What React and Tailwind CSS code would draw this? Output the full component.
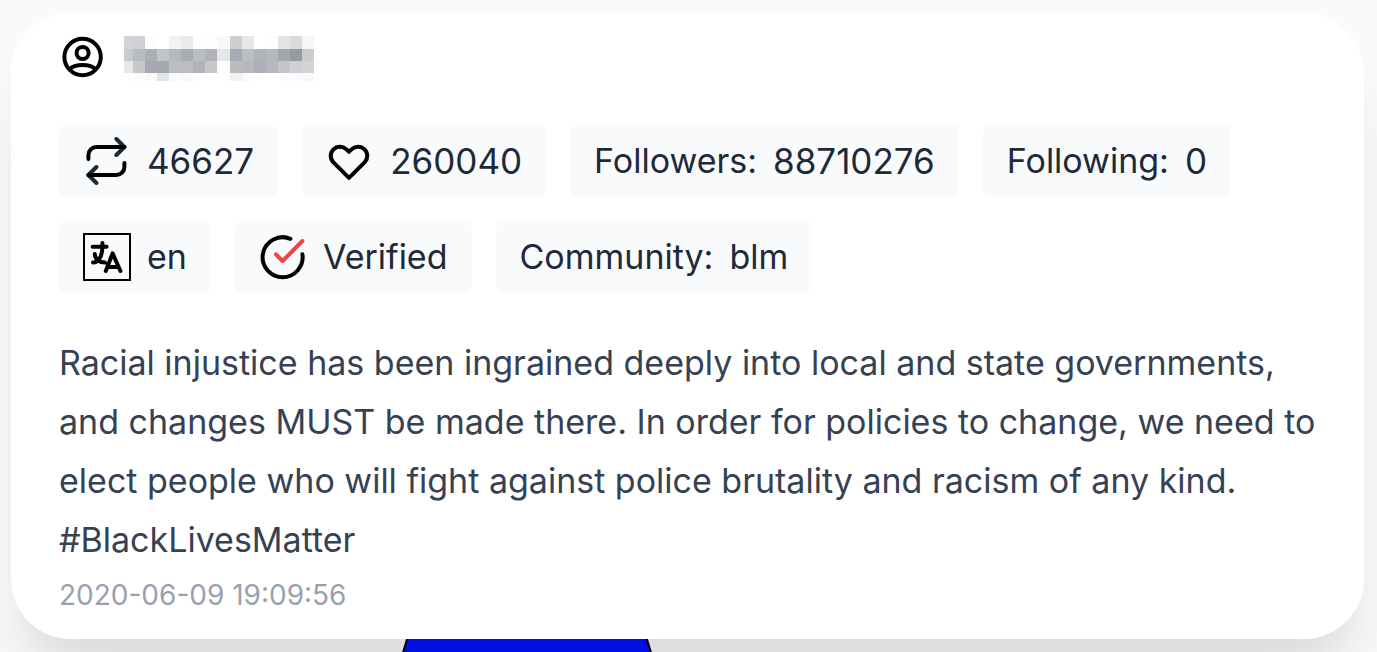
const COLS = [
  [0, 9], [9, 12], [21, 12], [33, 12], [45, 12], [57, 12], [69, 12], [81, 12],
  [93, 13], [106, 12], [118, 12], [130, 12], [142, 12], [154, 12], [166, 12], [178, 12],
];
const ROWS = [[0, 13], [13, 12], [25, 12], [37, 8]];
const TONES = [
  ['#d1d3d7', '#cdd1d5', '#fcfcfd', '#ffffff', '#f1f2f4', '#e8eaec', '#fdfdfd', '#fdfdfd', '#f8f8f9', '#cecfd3', '#e7e8ea', '#ffffff', '#fdfdfd', '#e3e4e6', '#d9dbdd', '#f5f6f6'],
  ['#c9cacd', '#b8bcc1', '#abafb4', '#c1c5ca', '#b5b8be', '#a9acb1', '#babdc1', '#b0b3b8', '#e5e6e8', '#a9abb5', '#bbbec5', '#b1b5ba', '#b5b8bd', '#a3a6ac', '#969ba3', '#cacdd0'],
  ['#e5e7e8', '#c5c9cc', '#a5a8b1', '#a5a8b1', '#bbbec3', '#babdc2', '#b0b3b8', '#c7c8cd', '#fdfdfd', '#b9bcc1', '#b6b9be', '#acafb5', '#b5b8bc', '#c3c6c9', '#cfd0d5', '#d3d4d8'],
  ['#fdfdfd', '#fbfbfb', '#fafafa', '#e3e4e7', '#fbfbfb', '#f8f8f9', '#fdfdfd', '#ffffff', '#ffffff', '#f0f0f1', '#fbfbfb', '#ffffff', '#ffffff', '#fcfcfc', '#fbfbfb', '#f8f8f9'],
];

function HiddenName() {
  return (
    <svg className="h-[45px] w-[190px]" viewBox="0 0 190 45" shapeRendering="crispEdges" role="img" aria-label="Hidden name">
      {ROWS.map(([y, h], r) =>
        COLS.map(([x, w], c) => <rect key={`${r}-${c}`} x={x} y={y} width={w} height={h} fill={TONES[r][c]} />)
      )}
    </svg>
  );
}

function Icon({ children }) {
  return (
    <svg className="size-12 shrink-0" viewBox="0 0 24 24" fill="none" stroke="#000" strokeWidth="2" strokeLinecap="round" strokeLinejoin="round" aria-hidden="true">
      {children}
    </svg>
  );
}

function UserIcon() {
  return (
    <Icon>
      <circle cx="11.800" cy="12" r="9.100" />
      <circle cx="11.800" cy="10" r="3" />
      <path d="M5.700 17.700C7.100 16.500 9.400 16 11.800 16S16.500 16.500 17.900 17.700" />
    </Icon>
  );
}

function RetweetIcon() {
  return (
    <Icon>
      <path d="M16.700 1l4 4-4 4M6.700 23l-4-4 4-4" stroke="#1f2937" />
      <path d="M2.700 11V9a4 4 0 0 1 4-4h14M20.700 13v2a4 4 0 0 1-4 4H2.700" />
    </Icon>
  );
}

function HeartIcon() {
  return (
    <Icon>
      <path d="M3.600 12.550 11.500 20.400l7.900-7.850a4.600 4.600 0 0 0-6.500-6.500L11.500 7.400l-1.400-1.350a4.600 4.600 0 0 0-6.500 6.500Z" />
    </Icon>
  );
}

function LanguageIcon() {
  return (
    <Icon>
      <path d="M.5.5h23v23H.5z" strokeWidth="1" strokeLinejoin="miter" />
      <path d="M4.800 6.900h7M9.700 5v2.500c-.2 4-1.800 7.300-4.700 7.300M5.900 10.500c0 2.300 2 4.200 5 4.300M11.400 19l3.400-8.800 3.900 8.800M12.600 17h5" />
    </Icon>
  );
}

function VerifiedIcon() {
  return (
    <Icon>
      <path d="M15.700 2.900A10 10 0 1 0 21.700 10.600" />
      <path d="M8.500 10.700 11.800 14 21.700 4" stroke="#ef4444" />
    </Icon>
  );
}

function Chip({ icon, label, numeric, children }) {
  return (
    <li className="flex h-18 items-center gap-4 rounded-lg bg-gray-50 px-6">
      {icon}
      {label && <span>{label}</span>}
      <span className={numeric ? 'text-[35px]' : undefined}>{children}</span>
    </li>
  );
}

export default function App() {
  return (
    <main className="flex min-h-screen flex-col overflow-hidden bg-[#f8fafc] pt-[13px] pr-[13px] pl-[11px] font-['Inter','Liberation_Sans',sans-serif]">
      <article className="relative z-10 rounded-[60px] bg-white px-12 pt-5 pb-6 shadow-[0_60px_75px_-15px_rgba(0,0,0,0.1),0_30px_30px_-15px_rgba(0,0,0,0.04)]">
        <header className="flex items-end gap-[17px]">
          <UserIcon />
          <HiddenName />
        </header>
        <ul className="mt-11 flex flex-wrap gap-6 text-[34px] leading-none text-gray-800">
          <Chip icon={<RetweetIcon />} numeric>46627</Chip>
          <Chip icon={<HeartIcon />} numeric>260040</Chip>
          <Chip label="Followers:" numeric>88710276</Chip>
          <Chip label="Following:" numeric>0</Chip>
          <Chip icon={<LanguageIcon />}>en</Chip>
          <Chip icon={<VerifiedIcon />}>Verified</Chip>
          <Chip label="Community:">blm</Chip>
        </ul>
        <p className="mt-10 text-[34px] leading-[59px] text-gray-700">
          Racial injustice has been ingrained deeply into local and state governments, and changes MUST be made there. In order for policies to change, we need to elect people who will fight against police brutality and racism of any kind. #BlackLivesMatter
        </p>
        <time className="mt-1.5 block text-[28px] leading-10 text-gray-400" dateTime="2020-06-09T19:09:56">2020-06-09 19:09:56</time>
      </article>
      <svg className="ml-[388px] h-4 w-[256px]" viewBox="0 0 256 16" aria-hidden="true">
        <path d="M9 -3 3 17H253L247 -3Z" fill="#0012ff" stroke="#000" strokeWidth="2" />
      </svg>
    </main>
  );
}
